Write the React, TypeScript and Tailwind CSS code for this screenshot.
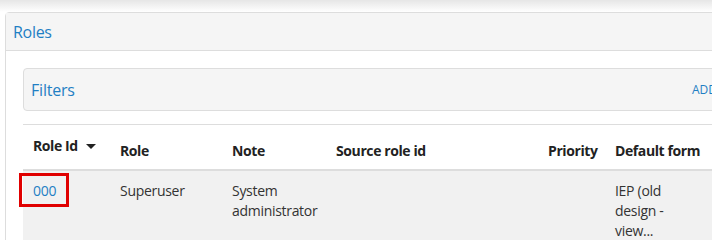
import React from "react";

const font = { fontFamily: '"Segoe UI", "Open Sans", "Noto Sans", sans-serif' };

export default function App() {
  return (
    <div className="w-[712px] h-[240px] overflow-hidden bg-white relative" style={font}>
      <div className="h-[12px] bg-gradient-to-b from-[#e6e6e6] to-white" />
      <div className="ml-[5px] w-[720px] border border-[#dddddd] rounded-tl-[4px] bg-white">
        <div className="h-[38px] bg-[#f5f5f5] border-b border-[#dddddd] flex items-center pl-[7px] text-[16px] tracking-[-0.3px] text-[#1f7fc4]">
          Roles
        </div>
        <div className="pl-[17px] pt-[17px]">
          <div className="h-[43px] bg-[#f5f5f5] border border-[#dddddd] rounded-l-[4px] flex items-center pl-[7px] text-[#1f7fc4] overflow-hidden">
            <span className="text-[16px] w-[661px] shrink-0 tracking-[-0.2px]">Filters</span>
            <span className="text-[12px] whitespace-nowrap shrink-0">ADD</span>
          </div>
          <div className="mt-[13px] border-t border-[#dddddd]">
            <div className="flex h-[46px] border-b-2 border-[#dddddd] text-[14px] font-bold tracking-[-0.4px] text-[#222]">
              <div className="w-[87px] pl-[10px] pt-[10px] flex items-start">
                <span>Role Id</span>
                <svg width="10" height="6" viewBox="0 0 10 6" className="ml-[8px] mt-[9px]">
                  <path d="M0 0 L10 0 L5 5 Z" fill="#222" />
                </svg>
              </div>
              <div className="w-[112px] pl-[10px] pt-[15px]">Role</div>
              <div className="w-[104px] pl-[10px] pt-[15px]">Note</div>
              <div className="w-[212px] pl-[10px] pt-[15px]">Source role id</div>
              <div className="w-[67px] pl-[10px] pt-[15px]">Priority</div>
              <div className="w-[110px] pl-[10px] pt-[15px] whitespace-nowrap">Default form</div>
            </div>
            <div className="flex bg-[#f1f1f1] h-[80px] text-[14px] leading-[20px] tracking-[-0.3px] text-[#333]">
              <div className="w-[87px] pt-[10px] relative">
                <span className="pl-[10px] text-[#1f7fc4]">000</span>
                <div className="absolute left-[-4px] top-[2px] w-[50px] h-[34px] border-[3px] border-[#e00000]" />
              </div>
              <div className="w-[112px] pl-[10px] pt-[10px]">Superuser</div>
              <div className="w-[104px] pl-[10px] pt-[10px]">System<br />administrator</div>
              <div className="w-[212px]" />
              <div className="w-[67px]" />
              <div className="w-[110px] pl-[10px] pt-[10px]">IEP (old<br />design -<br />view...</div>
            </div>
          </div>
        </div>
      </div>
    </div>
  );
}
